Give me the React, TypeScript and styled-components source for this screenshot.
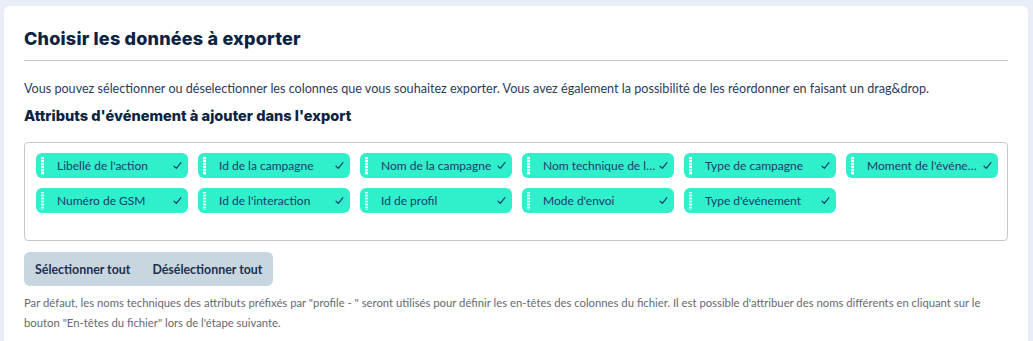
import React from 'react'
import styled, { createGlobalStyle } from 'styled-components'

const GlobalStyle = createGlobalStyle`
  html, body {
    margin: 0;
    padding: 0;
    background: #e9eef6;
  }
  * { box-sizing: border-box; }
`

const Page = styled.div`
  padding: 6px 5px 0 4px;
  height: 341px;
  overflow: hidden;
`

const Card = styled.section`
  background: #fff;
  border-radius: 6px 6px 0 0;
  padding: 21px 20px 0 20px;
  height: 400px;
`

const Title = styled.h2`
  margin: 0;
  font-family: Inter, 'Noto Sans', sans-serif;
  font-weight: 800;
  font-size: 18px;
  letter-spacing: 0.2px;
  line-height: 24px;
  color: #0b2343;
  padding-bottom: 9px;
  border-bottom: 1px solid #c6c6c6;
`

const Intro = styled.p`
  margin: 19px 0 0;
  font-family: Lato, 'Noto Sans', sans-serif;
  font-size: 12.6px;
  line-height: 18px;
  color: #2a3c5a;
`

const SubTitle = styled.h3`
  margin: 8px 0 0;
  font-family: Inter, 'Noto Sans', sans-serif;
  font-weight: 800;
  font-size: 14.6px;
  line-height: 20px;
  color: #0b2343;
`

const ChipBox = styled.div`
  margin-top: 16px;
  border: 1px solid #c8c8c8;
  border-radius: 4px;
  height: 99px;
  padding: 10px 11px;
  display: grid;
  grid-template-columns: repeat(6, 152px);
  grid-auto-rows: 25px;
  column-gap: 10px;
  row-gap: 10px;
  align-content: start;
`

const Chip = styled.div`
  display: flex;
  align-items: center;
  background: #2ff0cb;
  border-radius: 6px;
  padding: 0 6px 0 5px;
  font-family: Lato, 'Noto Sans', sans-serif;
  font-size: 12px;
  color: #1f3a6c;
`

const Grip = styled.span`
  width: 3px;
  height: 18px;
  flex-shrink: 0;
  background-image: repeating-linear-gradient(to bottom, #fff 0 1.5px, rgba(255, 255, 255, 0.35) 1.5px 3px);
  margin-right: 13px;
`

const ChipLabel = styled.span`
  flex: 1;
  white-space: nowrap;
  overflow: hidden;
  text-overflow: ellipsis;
`

const Check = styled.svg`
  width: 9px;
  height: 9px;
  flex-shrink: 0;
  margin-left: 3px;
`

const ButtonGroup = styled.div`
  display: inline-flex;
  margin-top: 11px;
  background: #c8d6e0;
  border-radius: 6px;
  height: 34px;
  align-items: center;
  padding: 0 11px;
  gap: 22px;
`

const GroupButton = styled.button`
  border: none;
  background: none;
  padding: 0;
  font-family: Lato, 'Noto Sans', sans-serif;
  font-weight: 700;
  font-size: 12.4px;
  color: #1d2f4c;
  cursor: pointer;
`

const Note = styled.p`
  margin: 7px 0 0;
  font-family: Lato, 'Noto Sans', sans-serif;
  font-size: 11.3px;
  line-height: 20px;
  color: #666a70;
`

const chips = [
  "Libellé de l'action",
  'Id de la campagne',
  'Nom de la campagne',
  'Nom technique de la campagne',
  'Type de campagne',
  "Moment de l'événement",
  'Numéro de GSM',
  "Id de l'interaction",
  'Id de profil',
  "Mode d'envoi",
  "Type d'événement",
]

const CheckIcon = () => (
  <Check viewBox="0 0 10 10">
    <path d="M1.2 5.8 L3.7 8.2 L8.8 1.8" fill="none" stroke="#1f3a6c" strokeWidth="1.3" strokeLinecap="round" strokeLinejoin="round" />
  </Check>
)

const App = () => (
  <>
    <GlobalStyle />
    <Page>
      <Card>
        <Title>Choisir les données à exporter</Title>
        <Intro>
          Vous pouvez sélectionner ou déselectionner les colonnes que vous souhaitez exporter. Vous avez également la
          possibilité de les réordonner en faisant un drag&amp;drop.
        </Intro>
        <SubTitle>Attributs d'événement à ajouter dans l'export</SubTitle>
        <ChipBox>
          {chips.map(label => (
            <Chip key={label}>
              <Grip />
              <ChipLabel>{label}</ChipLabel>
              <CheckIcon />
            </Chip>
          ))}
        </ChipBox>
        <ButtonGroup>
          <GroupButton>Sélectionner tout</GroupButton>
          <GroupButton>Désélectionner tout</GroupButton>
        </ButtonGroup>
        <Note>
          Par défaut, les noms techniques des attributs préfixés par "profile - " seront utilisés pour définir les
          en-têtes des colonnes du fichier. Il est possible d'attribuer des noms différents en cliquant sur le bouton
          "En-têtes du fichier" lors de l'étape suivante.
        </Note>
      </Card>
    </Page>
  </>
)

export default App
